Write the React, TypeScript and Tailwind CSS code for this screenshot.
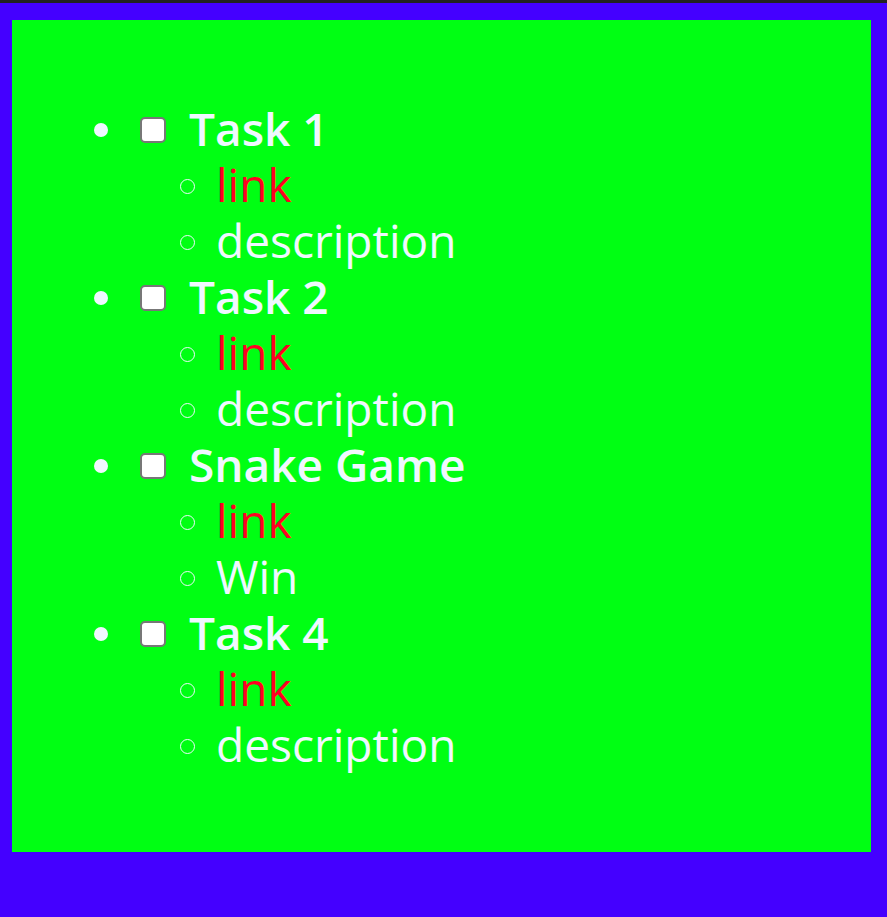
import React from 'react';

interface Task {
  title: string;
  link: string;
  note: string;
}

const tasks: Task[] = [
  { title: 'Task 1', link: 'link', note: 'description' },
  { title: 'Task 2', link: 'link', note: 'description' },
  { title: 'Snake Game', link: 'link', note: 'Win' },
  { title: 'Task 4', link: 'link', note: 'description' },
];

const SubItem = ({ children }: { children: React.ReactNode }) => (
  <li className="flex items-center h-[56px] pl-[86px]">
    <span className="w-[15px] h-[15px] rounded-full border border-[#f0f8ff] shrink-0" />
    <span className="ml-[21px] mb-[4px]">{children}</span>
  </li>
);

const TaskItem = ({ task }: { task: Task }) => (
  <li>
    <div className="flex items-center h-[56px]">
      <span className="w-[14px] h-[14px] rounded-full bg-[#f0f8ff] shrink-0" />
      <input
        type="checkbox"
        className="ml-[32px] w-[26px] h-[26px] shrink-0 appearance-none rounded-[5px] border-2 border-[#777] bg-white"
      />
      <span className="ml-[23px] mb-[4px] font-semibold">{task.title}</span>
    </div>
    <ul>
      <SubItem>
        <a className="text-[#ff0022]">{task.link}</a>
      </SubItem>
      <SubItem>{task.note}</SubItem>
    </ul>
  </li>
);

export default function App() {
  return (
    <div className="min-h-[917px] bg-[#4400ff] font-['Open_Sans',sans-serif]">
      <div className="h-[3px] bg-[#222]" />
      <div className="ml-[12px] mt-[17px] w-[859px] h-[832px] bg-[#00ff13] text-[#f0f8ff] text-[46px] leading-[56px]">
        <ul className="pt-[82px] pl-[82px]">
          {tasks.map((t) => (
            <TaskItem key={t.title} task={t} />
          ))}
        </ul>
      </div>
    </div>
  );
}
